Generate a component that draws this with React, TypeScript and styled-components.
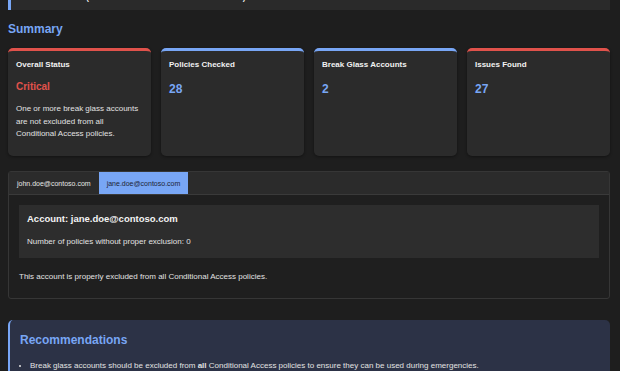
import React from "react";
import styled, { createGlobalStyle } from "styled-components";

const blue = "#78a6f5";
const red = "#e0524b";

const GlobalStyle = createGlobalStyle`
  html, body {
    margin: 0;
    padding: 0;
    background: #1e1e1e;
    color: #e6e6e6;
    font-family: "Liberation Sans", Arial, sans-serif;
    overflow: hidden;
  }
`;

const Page = styled.div`
  padding: 0 10px 0 8px;
  margin-top: -14px;
`;

const TenantBox = styled.div`
  background: #2a2a2a;
  border-left: 3px solid ${blue};
  padding: 6px 10px;
  font-size: 8px;
  line-height: 12px;
  font-weight: bold;
  color: #f0f0f0;
`;

const SectionTitle = styled.h2`
  margin: 11px 0 11px;
  font-size: 12px;
  line-height: 16px;
  font-weight: bold;
  color: ${blue};
`;

const CardGrid = styled.div`
  display: grid;
  grid-template-columns: repeat(4, 1fr);
  gap: 10px;
`;

const Card = styled.div<{ $accent: string }>`
  background: #2b2b2b;
  border-top: 3px solid ${(p) => p.$accent};
  border-radius: 5px;
  padding: 8px;
  min-height: 89px;
  box-shadow: 0 1px 3px rgba(0, 0, 0, 0.4);
`;

const CardTitle = styled.div`
  font-size: 8px;
  line-height: 12px;
  font-weight: bold;
  color: #f2f2f2;
`;

const StatusText = styled.div`
  margin-top: 9px;
  font-size: 10px;
  line-height: 14px;
  font-weight: bold;
  color: ${red};
`;

const Value = styled.div`
  margin-top: 10px;
  font-size: 12px;
  line-height: 16px;
  font-weight: bold;
  color: ${blue};
`;

const CardText = styled.p`
  margin: 9px 0 0;
  font-size: 8px;
  line-height: 12.5px;
  color: #e2e2e2;
`;

const TabPanel = styled.div`
  margin-top: 15px;
  border: 1px solid #363636;
  border-radius: 3px;
  background: #1f1f1f;
`;

const TabBar = styled.div`
  display: flex;
  background: #2b2b2b;
  border-bottom: 1px solid #3a3a3a;
`;

const Tab = styled.div<{ $active?: boolean }>`
  height: 22px;
  padding: 0 8px;
  display: flex;
  align-items: center;
  font-size: 7px;
  color: ${(p) => (p.$active ? "#1c2333" : "#e6e6e6")};
  background: ${(p) => (p.$active ? blue : "transparent")};
`;

const TabBody = styled.div`
  padding: 10px 10px 15px;
`;

const AccountBox = styled.div`
  background: #2d2d2d;
  padding: 7px 8px 10px;
`;

const AccountTitle = styled.h3`
  margin: 0;
  font-size: 9.5px;
  line-height: 14px;
  font-weight: bold;
  color: #f4f4f4;
`;

const SmallText = styled.p<{ $gap: number }>`
  margin: ${(p) => p.$gap}px 0 0;
  font-size: 8px;
  line-height: 12px;
  color: #e2e2e2;
`;

const Recommendations = styled.div`
  margin-top: 21px;
  background: #2c3246;
  border-left: 2px solid ${blue};
  border-radius: 5px;
  padding: 12px 10px 12px 10px;
`;

const RecTitle = styled.h2`
  margin: 0;
  font-size: 12px;
  line-height: 16px;
  font-weight: bold;
  color: ${blue};
`;

const RecList = styled.ul`
  margin: 12px 0 0;
  padding-left: 10px;
  font-size: 8px;
  line-height: 12px;
  color: #e2e2e2;
`;

export default function App() {
  return (
    <>
      <GlobalStyle />
      <Page>
        <TenantBox>Tenant: Contoso (123e4567-e89b-12d3-a456-426614174000)</TenantBox>

        <SectionTitle>Summary</SectionTitle>
        <CardGrid>
          <Card $accent={red}>
            <CardTitle>Overall Status</CardTitle>
            <StatusText>Critical</StatusText>
            <CardText>
              One or more break glass accounts are not excluded from all
              Conditional Access policies.
            </CardText>
          </Card>
          <Card $accent={blue}>
            <CardTitle>Policies Checked</CardTitle>
            <Value>28</Value>
          </Card>
          <Card $accent={blue}>
            <CardTitle>Break Glass Accounts</CardTitle>
            <Value>2</Value>
          </Card>
          <Card $accent={red}>
            <CardTitle>Issues Found</CardTitle>
            <Value>27</Value>
          </Card>
        </CardGrid>

        <TabPanel>
          <TabBar>
            <Tab>john.doe@contoso.com</Tab>
            <Tab $active>jane.doe@contoso.com</Tab>
          </TabBar>
          <TabBody>
            <AccountBox>
              <AccountTitle>Account: jane.doe@contoso.com</AccountTitle>
              <SmallText $gap={10}>
                Number of policies without proper exclusion: 0
              </SmallText>
            </AccountBox>
            <SmallText $gap={13}>
              This account is properly excluded from all Conditional Access
              policies.
            </SmallText>
          </TabBody>
        </TabPanel>

        <Recommendations>
          <RecTitle>Recommendations</RecTitle>
          <RecList>
            <li>
              Break glass accounts should be excluded from <b>all</b>{" "}
              Conditional Access policies to ensure they can be used during
              emergencies.
            </li>
          </RecList>
        </Recommendations>
      </Page>
    </>
  );
}
